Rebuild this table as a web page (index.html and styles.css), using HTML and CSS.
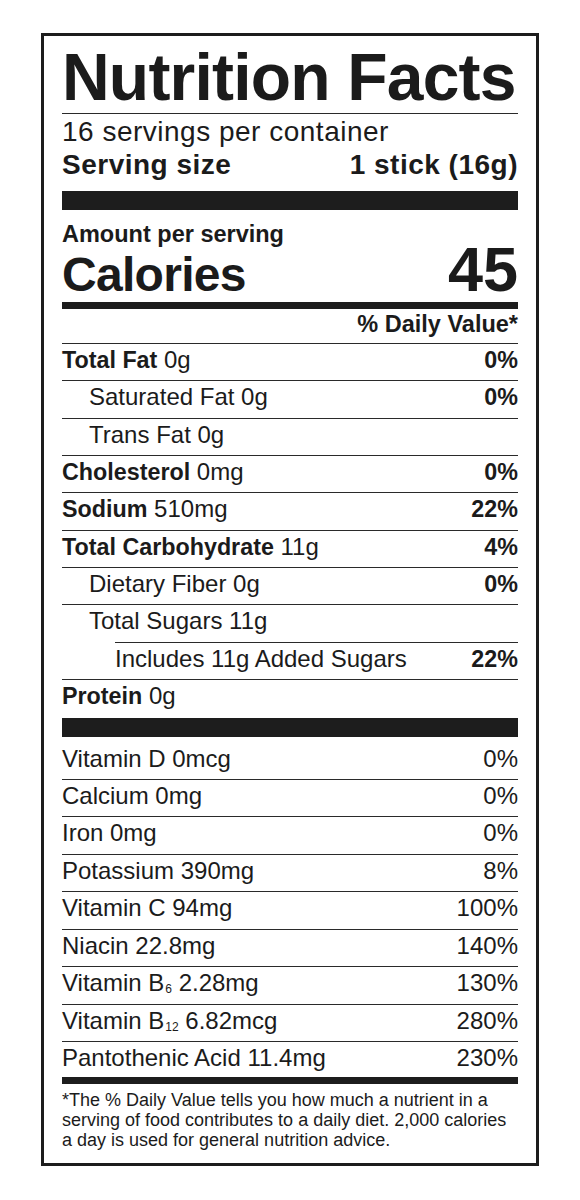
FILE: index.html
```html
<!DOCTYPE html>
<html lang="en">
<head>
<meta charset="utf-8">
<title>Nutrition Facts</title>
<link rel="stylesheet" href="styles.css">
</head>
<body>
<section class="label">
  <h1 class="title">Nutrition Facts</h1>
  <p class="servings">16 servings per container</p>
  <div class="serving-size"><span>Serving size</span><span>1 stick (16g)</span></div>
  <div class="bar bar-thick"></div>
  <p class="amount">Amount per serving</p>
  <div class="calories"><span class="cal-label">Calories</span><span class="cal-value">45</span></div>
  <div class="bar bar-medium"></div>
  <div class="dv-head">% Daily Value*</div>

  <div class="row"><span><b>Total Fat</b> 0g</span><b>0%</b></div>
  <div class="row indent"><span>Saturated Fat 0g</span><b>0%</b></div>
  <div class="row indent"><span>Trans Fat 0g</span></div>
  <div class="row"><span><b>Cholesterol</b> 0mg</span><b>0%</b></div>
  <div class="row"><span><b>Sodium</b> 510mg</span><b>22%</b></div>
  <div class="row"><span><b>Total Carbohydrate</b> 11g</span><b>4%</b></div>
  <div class="row indent"><span>Dietary Fiber 0g</span><b>0%</b></div>
  <div class="row indent"><span>Total Sugars 11g</span></div>
  <div class="row indent2"><span>Includes 11g Added Sugars</span><b>22%</b></div>
  <div class="row"><span><b>Protein</b> 0g</span></div>

  <div class="bar bar-thick bar-vit"></div>

  <div class="row vit first"><span>Vitamin D 0mcg</span><span>0%</span></div>
  <div class="row vit"><span>Calcium 0mg</span><span>0%</span></div>
  <div class="row vit"><span>Iron 0mg</span><span>0%</span></div>
  <div class="row vit"><span>Potassium 390mg</span><span>8%</span></div>
  <div class="row vit"><span>Vitamin C 94mg</span><span>100%</span></div>
  <div class="row vit"><span>Niacin 22.8mg</span><span>140%</span></div>
  <div class="row vit"><span>Vitamin B<span class="sub">6</span> 2.28mg</span><span>130%</span></div>
  <div class="row vit"><span>Vitamin B<span class="sub">12</span> 6.82mcg</span><span>280%</span></div>
  <div class="row vit"><span>Pantothenic Acid 11.4mg</span><span>230%</span></div>

  <div class="bar bar-medium bar-end"></div>
  <p class="footnote">*The % Daily Value tells you how much a nutrient in a<br>serving of food contributes to a daily diet. 2,000 calories<br>a day is used for general nutrition advice.</p>
</section>
</body>
</html>
```

FILE: styles.css
```css
* {
  box-sizing: border-box;
}

html, body {
  margin: 0;
  padding: 0;
  background: #ffffff;
}

body {
  font-family: "Liberation Sans", Arial, sans-serif;
  color: #1b1b1b;
}

.label {
  width: 498px;
  margin: 33px 0 0 41px;
  border: 3px solid #1d1d1d;
  padding: 8px 18px 13px 18px;
}

.title {
  margin: 0;
  font-size: 66px;
  line-height: 66px;
  font-weight: 700;
  letter-spacing: -0.8px;
  padding-bottom: 3px;
  border-bottom: 1px solid #2a2a2a;
}

.servings {
  margin: 0;
  padding-top: 3px;
  font-size: 28px;
  line-height: 30px;
  letter-spacing: 0.5px;
}

.serving-size {
  display: flex;
  justify-content: space-between;
  margin-top: 3px;
  font-size: 28px;
  line-height: 30px;
  font-weight: 700;
  letter-spacing: 0.5px;
}

.bar {
  background: #1d1d1d;
}

.bar-thick {
  height: 19px;
  margin-top: 11px;
}

.bar-vit {
  margin-top: 2px;
}

.bar-medium {
  height: 7px;
}

.bar-end {
  margin-top: -1px;
}

.amount {
  margin: 11px 0 0 0;
  font-size: 23.5px;
  line-height: 26px;
  font-weight: 700;
}

.calories {
  display: flex;
  justify-content: space-between;
  align-items: baseline;
  height: 55px;
  font-weight: 700;
}

.cal-label {
  font-size: 48px;
  line-height: 44px;
  letter-spacing: -0.7px;
}

.cal-value {
  font-size: 63px;
  line-height: 44px;
}

.dv-head {
  margin-top: 2px;
  padding-bottom: 6px;
  font-size: 23.5px;
  line-height: 26px;
  font-weight: 700;
  text-align: right;
}

.row {
  display: flex;
  justify-content: space-between;
  height: 37.33px;
  border-top: 1px solid #2a2a2a;
  padding-top: 3px;
  font-size: 24px;
  line-height: 26px;
}

.row b {
  font-size: 23.3px;
}

.row.indent {
  padding-left: 27px;
}

.row.indent2 {
  margin-left: 53px;
}

.row.vit {
  height: 37.43px;
}

.row.vit.first {
  height: 41.7px;
  border-top: none;
  padding-top: 9px;
}

.sub {
  font-size: 12px;
  line-height: 0;
  vertical-align: -2px;
  margin-left: 1px;
}

.footnote {
  margin: 6px 0 0 0;
  font-size: 18px;
  line-height: 20px;
}
```
